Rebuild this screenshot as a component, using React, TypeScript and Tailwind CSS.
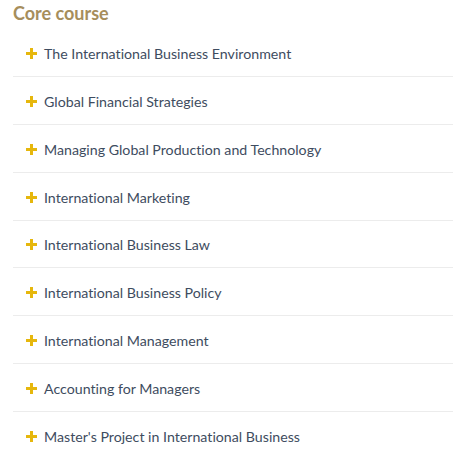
const courses = [
  'The International Business Environment',
  'Global Financial Strategies',
  'Managing Global Production and Technology',
  'International Marketing',
  'International Business Law',
  'International Business Policy',
  'International Management',
  'Accounting for Managers',
  "Master's Project in International Business",
];

function Plus() {
  return (
    <svg width="11" height="11" viewBox="0 0 11 11" className="flex-shrink-0">
      <rect x="4" y="0" width="3" height="11" fill="#e6b70d" />
      <rect x="0" y="4" width="11" height="3" fill="#e6b70d" />
    </svg>
  );
}

export default function App() {
  return (
    <div className="bg-white min-h-screen pl-[13px] font-['Lato',sans-serif] [font-variant-ligatures:none]">
      <h2 className="text-[18px] leading-[26px] pb-[3px] font-bold text-[#a68e5c]">Core course</h2>
      <ul>
        {courses.map((c, i) => (
          <li
            key={c}
            className={`flex items-center gap-[7px] pl-[13px] pt-[14.9px] pb-[12px] ${
              i < courses.length - 1 ? 'border-b border-[#ececec]' : ''
            }`}
          >
            <span className="-mt-[1px]">
              <Plus />
            </span>
            <span className="text-[14.2px] leading-[20px] text-[#3e4c60]">{c}</span>
          </li>
        ))}
      </ul>
    </div>
  );
}
